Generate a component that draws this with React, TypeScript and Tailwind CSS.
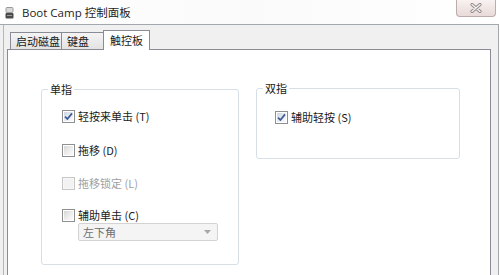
import React from "react";

// Boot Camp control panel, trackpad tab (Windows 7 look)

function Checkbox({ checked = false, disabled = false }: { checked?: boolean; disabled?: boolean }) {
  return (
    <div
      className={
        "relative w-[13px] h-[13px] shrink-0 border p-[1px] " +
        (disabled ? "border-[#c6c6c6] bg-[#f7f7f7]" : "border-[#8e8f8f] bg-white")
      }
    >
      <div
        className={
          "w-full h-full " +
          (disabled
            ? "bg-[#f2f2f2]"
            : checked
            ? "bg-gradient-to-br from-[#cfd6e2] via-[#e6eaf1] to-[#f9fafc]"
            : "bg-gradient-to-br from-[#d6d6d6] via-[#ececec] to-[#fbfbfb]")
        }
      />
      {checked && (
        <svg className="absolute left-[1px] top-[1px]" width="9" height="9" viewBox="0 0 9 9">
          <path d="M1 4.6 L3.4 7 L8 1.4" fill="none" stroke="#3d5a94" strokeWidth="1.7" />
        </svg>
      )}
    </div>
  );
}

function Row({
  label,
  checked,
  disabled,
  className = "",
}: {
  label: string;
  checked?: boolean;
  disabled?: boolean;
  className?: string;
}) {
  return (
    <div className={"flex items-center h-[14px] " + className}>
      <Checkbox checked={checked} disabled={disabled} />
      <span
        className={
          "ml-[3px] text-[11px] leading-[14px] whitespace-nowrap " +
          (disabled ? "text-[#a0a0a0]" : "text-[#1a1a1a]")
        }
      >
        {label}
      </span>
    </div>
  );
}

function GroupBox({
  title,
  className = "",
  children,
}: {
  title: string;
  className?: string;
  children?: React.ReactNode;
}) {
  return (
    <div className={"relative border border-[#d5dfe5] rounded-[3px] " + className}>
      <span className="absolute -top-[8px] left-[6px] bg-white px-[2px] text-[11px] leading-[14px] text-[#1a1a1a]">
        {title}
      </span>
      {children}
    </div>
  );
}

export default function App() {
  return (
    <div className="w-[500px] h-[275px] overflow-hidden bg-white flex flex-col font-['Noto_Sans_CJK_SC','Open_Sans',sans-serif]">
      {/* title bar */}
      <div className="h-[24px] shrink-0 flex items-start bg-gradient-to-r from-white via-[#fafafa] to-white">
        <div className="flex items-center h-[24px] pl-[5px] pt-[2px]">
          <svg width="9" height="12" viewBox="0 0 9 12">
            <rect x="1" y="0.5" width="7" height="5" rx="1" fill="#d9d9d9" stroke="#9a9a9a" />
            <rect x="0.5" y="6" width="8" height="5.5" rx="1" fill="#4b4b4b" />
            <rect x="2" y="8" width="5" height="1" fill="#9a9a9a" />
          </svg>
          <span className="ml-[8px] text-[11.5px] leading-[14px] text-[#1e1e1e] font-['Open_Sans','Noto_Sans_CJK_SC',sans-serif]">
            Boot Camp 控制面板
          </span>
        </div>
        <div className="ml-auto mr-[4px] w-[40px] h-[17px] border border-t-0 border-[#bcadab] rounded-b-[4px] bg-gradient-to-b from-[#f8f2f1] to-[#e8dad8] flex items-center justify-center">
          <svg width="12" height="10" viewBox="0 0 12 10">
            <path d="M2 1.5 L10 8.5 M10 1.5 L2 8.5" stroke="#8f8a89" strokeWidth="3.2" strokeLinecap="round" />
            <path d="M2 1.5 L10 8.5 M10 1.5 L2 8.5" stroke="#f6f1f0" strokeWidth="1.4" strokeLinecap="round" />
          </svg>
        </div>
      </div>

      {/* window body */}
      <div className="flex-1 mr-[1px] border-t border-r border-[#a3a8ae] bg-[#f0f0f0] pl-[3px]">
        <div className="h-full border-l border-[#b4b7bb] pl-[3px] pr-[7px]">
          {/* tabs */}
          <div className="h-[24px] flex items-end pl-[3px]">
            <div className="w-[52px] h-[17px] border border-b-0 border-[#898c95] bg-gradient-to-b from-[#f4f4f4] to-[#e3e3e3] text-[11px] leading-[16px] text-[#1a1a1a] pl-[5px]">
              启动磁盘
            </div>
            <div className="w-[42px] h-[17px] border border-l-0 border-b-0 border-[#898c95] bg-gradient-to-b from-[#f4f4f4] to-[#e3e3e3] text-[11px] leading-[16px] text-[#1a1a1a] pl-[5px]">
              键盘
            </div>
            <div className="relative z-10 -ml-[1px] -mb-[1px] w-[47px] h-[20px] border border-b-0 border-[#898c95] bg-white text-[11px] leading-[18px] text-[#1a1a1a] pl-[6px]">
              触控板
            </div>
          </div>

          {/* tab panel */}
          <div className="h-[240px] border border-[#898c95] bg-white pl-[33px] pt-[39px] flex items-start">
            <GroupBox title="单指" className="w-[198px] h-[176px] pl-[20px] pt-[19px]">
              <Row label="轻按来单击 (T)" checked />
              <Row label="拖移 (D)" className="mt-[20px]" />
              <Row label="拖移锁定 (L)" disabled className="mt-[19px]" />
              <Row label="辅助单击 (C)" className="mt-[18px]" />
              <div className="mt-[1px] ml-[16px] w-[140px] h-[18px] border border-[#d3d3d3] rounded-[2px] bg-[#f4f4f4] flex items-center pl-[4px] pr-[6px]">
                <span className="text-[11px] leading-[14px] text-[#6d6d6d]">左下角</span>
                <svg className="ml-auto" width="7" height="4" viewBox="0 0 7 4">
                  <path d="M0 0 L7 0 L3.5 4 Z" fill="#a8a8a8" />
                </svg>
              </div>
            </GroupBox>
            <GroupBox title="双指" className="ml-[17px] -mt-[1px] w-[204px] h-[71px] pl-[18px] pt-[21px]">
              <Row label="辅助轻按 (S)" checked />
            </GroupBox>
          </div>
        </div>
      </div>
    </div>
  );
}
